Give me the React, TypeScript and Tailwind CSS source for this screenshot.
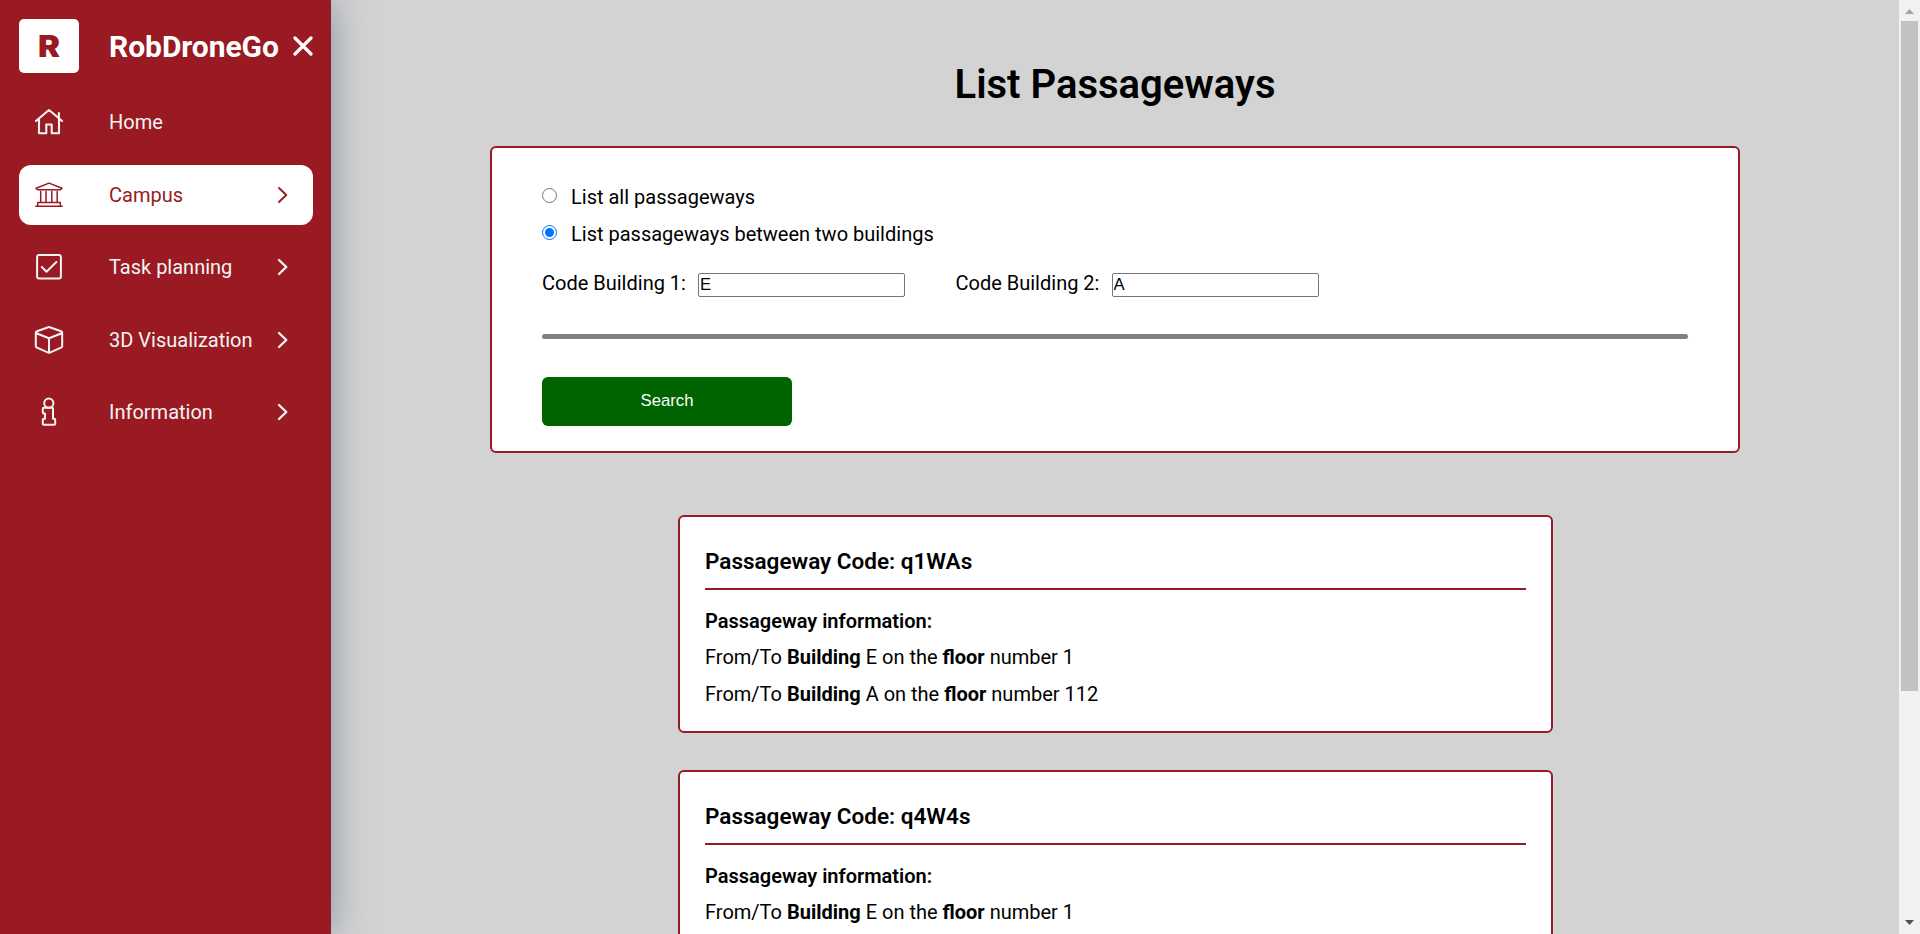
import React from "react";

type IconProps = { className?: string };

const HomeIcon = ({ className }: IconProps) => (
  <svg viewBox="0 0 30 30" className={className} fill="none" stroke="currentColor" strokeWidth="2.1" strokeLinecap="round" strokeLinejoin="round">
    <path d="M1.900 14 15 3l13.100 11M5 12.200v14.100h7.300v-8.800h5.400v8.800H25V12.200M24.900 10.600V6" />
  </svg>
);

const CampusIcon = ({ className }: IconProps) => (
  <svg viewBox="0 0 30 30" className={className} fill="none" stroke="currentColor" strokeWidth="1.500" strokeLinecap="round" strokeLinejoin="round">
    <path d="M2 8.300 15 3.100l13 5.200M2 8.300l2 1.500h22l2-1.500M6.700 11.500V22M12 11.500V22M17.800 11.500V22M23.200 11.500V22M3.700 25.500v-3.100h22.600v3.100M1.800 26.300h26.400" />
  </svg>
);

const TaskIcon = ({ className }: IconProps) => (
  <svg viewBox="0 0 30 30" className={className} fill="none" stroke="currentColor" strokeWidth="2" strokeLinecap="round" strokeLinejoin="round">
    <rect x="3.100" y="3" width="23.800" height="23.600" rx="2" />
    <path d="m7.800 15 4.700 4.800 9.900-9.800" />
  </svg>
);

const CubeIcon = ({ className }: IconProps) => (
  <svg viewBox="0 0 30 30" className={className} fill="none" stroke="currentColor" strokeWidth="2" strokeLinecap="round" strokeLinejoin="round">
    <path d="M14.200 2.200a2.400 2.400 0 0 1 1.600 0L27 6.200a1.800 1.800 0 0 1 1.200 1.700v13a2 2 0 0 1-1.200 1.800l-11.200 4.900a2 2 0 0 1-1.600 0L3 22.700a2 2 0 0 1-1.200-1.800v-13A1.800 1.800 0 0 1 3 6.200ZM2.300 8.200 15 13.300l12.700-5.100M15 13.300v14" />
  </svg>
);

const InfoIcon = ({ className }: IconProps) => (
  <svg viewBox="0 0 30 30" className={className} fill="none" stroke="currentColor" strokeWidth="2" strokeLinecap="round" strokeLinejoin="round">
    <circle cx="14.800" cy="6.200" r="4.600" />
    <path d="M10 10.800h8.200a.8.8 0 0 1 .8.8v10.200h1.200a1 1 0 0 1 1 1v4a1 1 0 0 1-1 1H9.800a1 1 0 0 1-1-1v-4a1 1 0 0 1 1-1H11v-5.200H9.800a1 1 0 0 1-1-1v-3.800a1 1 0 0 1 1-1Z" />
  </svg>
);

const Chevron = ({ thin }: { thin?: boolean }) => (
  <svg viewBox="0 0 20 20" className="size-5" fill="none" stroke="currentColor" strokeWidth={thin ? 1.9 : 2.4} strokeLinecap="round" strokeLinejoin="round">
    <path d="m6 3 7.300 7L6 17" />
  </svg>
);

const navItems = [
  { label: "Home", Icon: HomeIcon },
  { label: "Campus", Icon: CampusIcon, expandable: true, active: true },
  { label: "Task planning", Icon: TaskIcon, expandable: true },
  { label: "3D Visualization", Icon: CubeIcon, expandable: true },
  { label: "Information", Icon: InfoIcon, expandable: true },
];

function Sidebar() {
  return (
    <aside className="relative z-10 flex w-[331px] shrink-0 flex-col bg-[#991a22] pt-[19px] pr-[18px] pl-[19px] text-white shadow-[0_0_35px_0_rgba(55,75,115,0.5)]">
      <div className="flex h-[54px] items-center">
        <div className="flex h-[54px] w-[60px] shrink-0 items-center justify-center rounded-[5px] bg-white font-[Inter,sans-serif] text-[30px] leading-none font-black text-[#991a22]">
          <span className="scale-x-110">R</span>
        </div>
        <span className="ml-[30px] pt-px text-[30px] leading-none font-bold tracking-[-0.050px]">RobDroneGo</span>
        <svg viewBox="0 0 20 20" className="ml-auto size-5 shrink-0" fill="none" stroke="currentColor" strokeWidth="3.200" strokeLinecap="round">
          <path d="m2 2 16 16M18 2 2 18" />
        </svg>
      </div>
      <nav className="mt-[19px] flex flex-col gap-[12.500px]">
        {navItems.map(({ label, Icon, expandable, active }) => (
          <a
            key={label}
            className={
              active
                ? "flex h-[60px] items-center rounded-[12px] bg-white pr-[20px] text-[#991a22]"
                : "flex h-[60px] items-center rounded-[12px] pr-[20px] text-[#f3f3f3]"
            }
          >
            <span className="flex w-[60px] justify-center">
              <Icon className="size-[30px]" />
            </span>
            <span className="ml-[30px] text-[20px] leading-none">{label}</span>
            {expandable && (
              <span className="ml-auto">
                <Chevron thin={active} />
              </span>
            )}
          </a>
        ))}
      </nav>
    </aside>
  );
}

function Radio({ label, checked }: { label: string; checked?: boolean }) {
  return (
    <label className="flex h-[36.500px] items-center text-[20px]">
      <span
        className={
          checked
            ? "mb-[3px] flex size-[15px] items-center justify-center rounded-full border-[1.500px] border-[#0075ff]"
            : "mb-[3px] flex size-[15px] items-center justify-center rounded-full border border-[#767676]"
        }
      >
        {checked && <span className="size-[9px] rounded-full bg-[#0075ff]" />}
      </span>
      <span className="ml-[14px]">{label}</span>
    </label>
  );
}

function CodeField({ label, value }: { label: string; value: string }) {
  return (
    <label className="flex h-[30px] items-start text-[20px]">
      <span className="w-[156px]">{label}</span>
      <input
        readOnly
        value={value}
        className="mt-[5px] h-[24px] w-[207px] rounded-[2px] border border-[#767676] bg-white px-[1px] font-['Liberation_Sans',Arial,sans-serif] text-[16.700px]"
      />
    </label>
  );
}

function SearchPanel() {
  return (
    <section className="h-[307px] w-[1250px] shrink-0 rounded-[6px] border-2 border-[#991a22] bg-white px-[50px] pt-[31px]">
      <Radio label="List all passageways" />
      <Radio label="List passageways between two buildings" checked />
      <div className="mt-[16px] flex gap-[50.500px]">
        <CodeField label="Code Building 1:" value="E" />
        <CodeField label="Code Building 2:" value="A" />
      </div>
      <hr className="mt-[36px] h-[5px] rounded-[3px] border-0 bg-[#808080]" />
      <button className="mt-[38px] h-[49px] w-[250px] rounded-[6px] bg-[#006400] pb-[2px] font-['Liberation_Sans',Arial,sans-serif] text-[16.700px] text-white">
        Search
      </button>
    </section>
  );
}

type Passageway = { code: string; ends: { building: string; floor: number }[] };

const passageways: Passageway[] = [
  { code: "q1WAs", ends: [{ building: "E", floor: 1 }, { building: "A", floor: 112 }] },
  { code: "q4W4s", ends: [{ building: "E", floor: 1 }] },
];

function PassagewayCard({ code, ends }: Passageway) {
  return (
    <article className="h-[218px] w-[875px] shrink-0 rounded-[6px] border-2 border-[#991a22] bg-white px-[25px] pt-[25px] text-[20px]">
      <h2 className="h-[48px] border-b-2 border-[#991a22] pt-[3px] text-[22.500px] leading-[33px] font-semibold">
        Passageway Code: {code}
      </h2>
      <p className="mt-[13px] leading-[36px] font-semibold">Passageway information:</p>
      {ends.map(({ building, floor }) => (
        <p key={building} className="leading-[36.500px]">
          From/To <b className="font-bold">Building</b> {building} on the <b className="font-bold">floor</b> number {floor}
        </p>
      ))}
    </article>
  );
}

function ScrollBar() {
  return (
    <div className="flex w-[21px] shrink-0 flex-col items-center bg-[#f1f1f1]">
      <div className="flex h-[21px] items-center">
        <svg viewBox="0 0 9 5" className="mt-[2px] h-[5px] w-[9px]" fill="#a3a3a3">
          <path d="M0 5 4.500 0 9 5Z" />
        </svg>
      </div>
      <div className="h-[670px] w-[17px] bg-[#c1c1c1]" />
      <div className="mt-auto flex h-[21px] items-center">
        <svg viewBox="0 0 9 5" className="mt-[-2px] h-[5px] w-[9px]" fill="#505050">
          <path d="M0 0h9L4.500 5Z" />
        </svg>
      </div>
    </div>
  );
}

export default function App() {
  return (
    <div className="flex h-[934px] w-[1920px] overflow-hidden bg-[#d3d3d3] font-[Roboto,sans-serif] text-black">
      <Sidebar />
      <main className="flex flex-1 flex-col items-center">
        <h1 className="mt-[61px] mb-[38px] text-[40px] leading-[47px] font-semibold">List Passageways</h1>
        <SearchPanel />
        <div className="mt-[62px] flex flex-col gap-[37px] pl-px">
          {passageways.map((p) => (
            <PassagewayCard key={p.code} {...p} />
          ))}
        </div>
      </main>
      <ScrollBar />
    </div>
  );
}
